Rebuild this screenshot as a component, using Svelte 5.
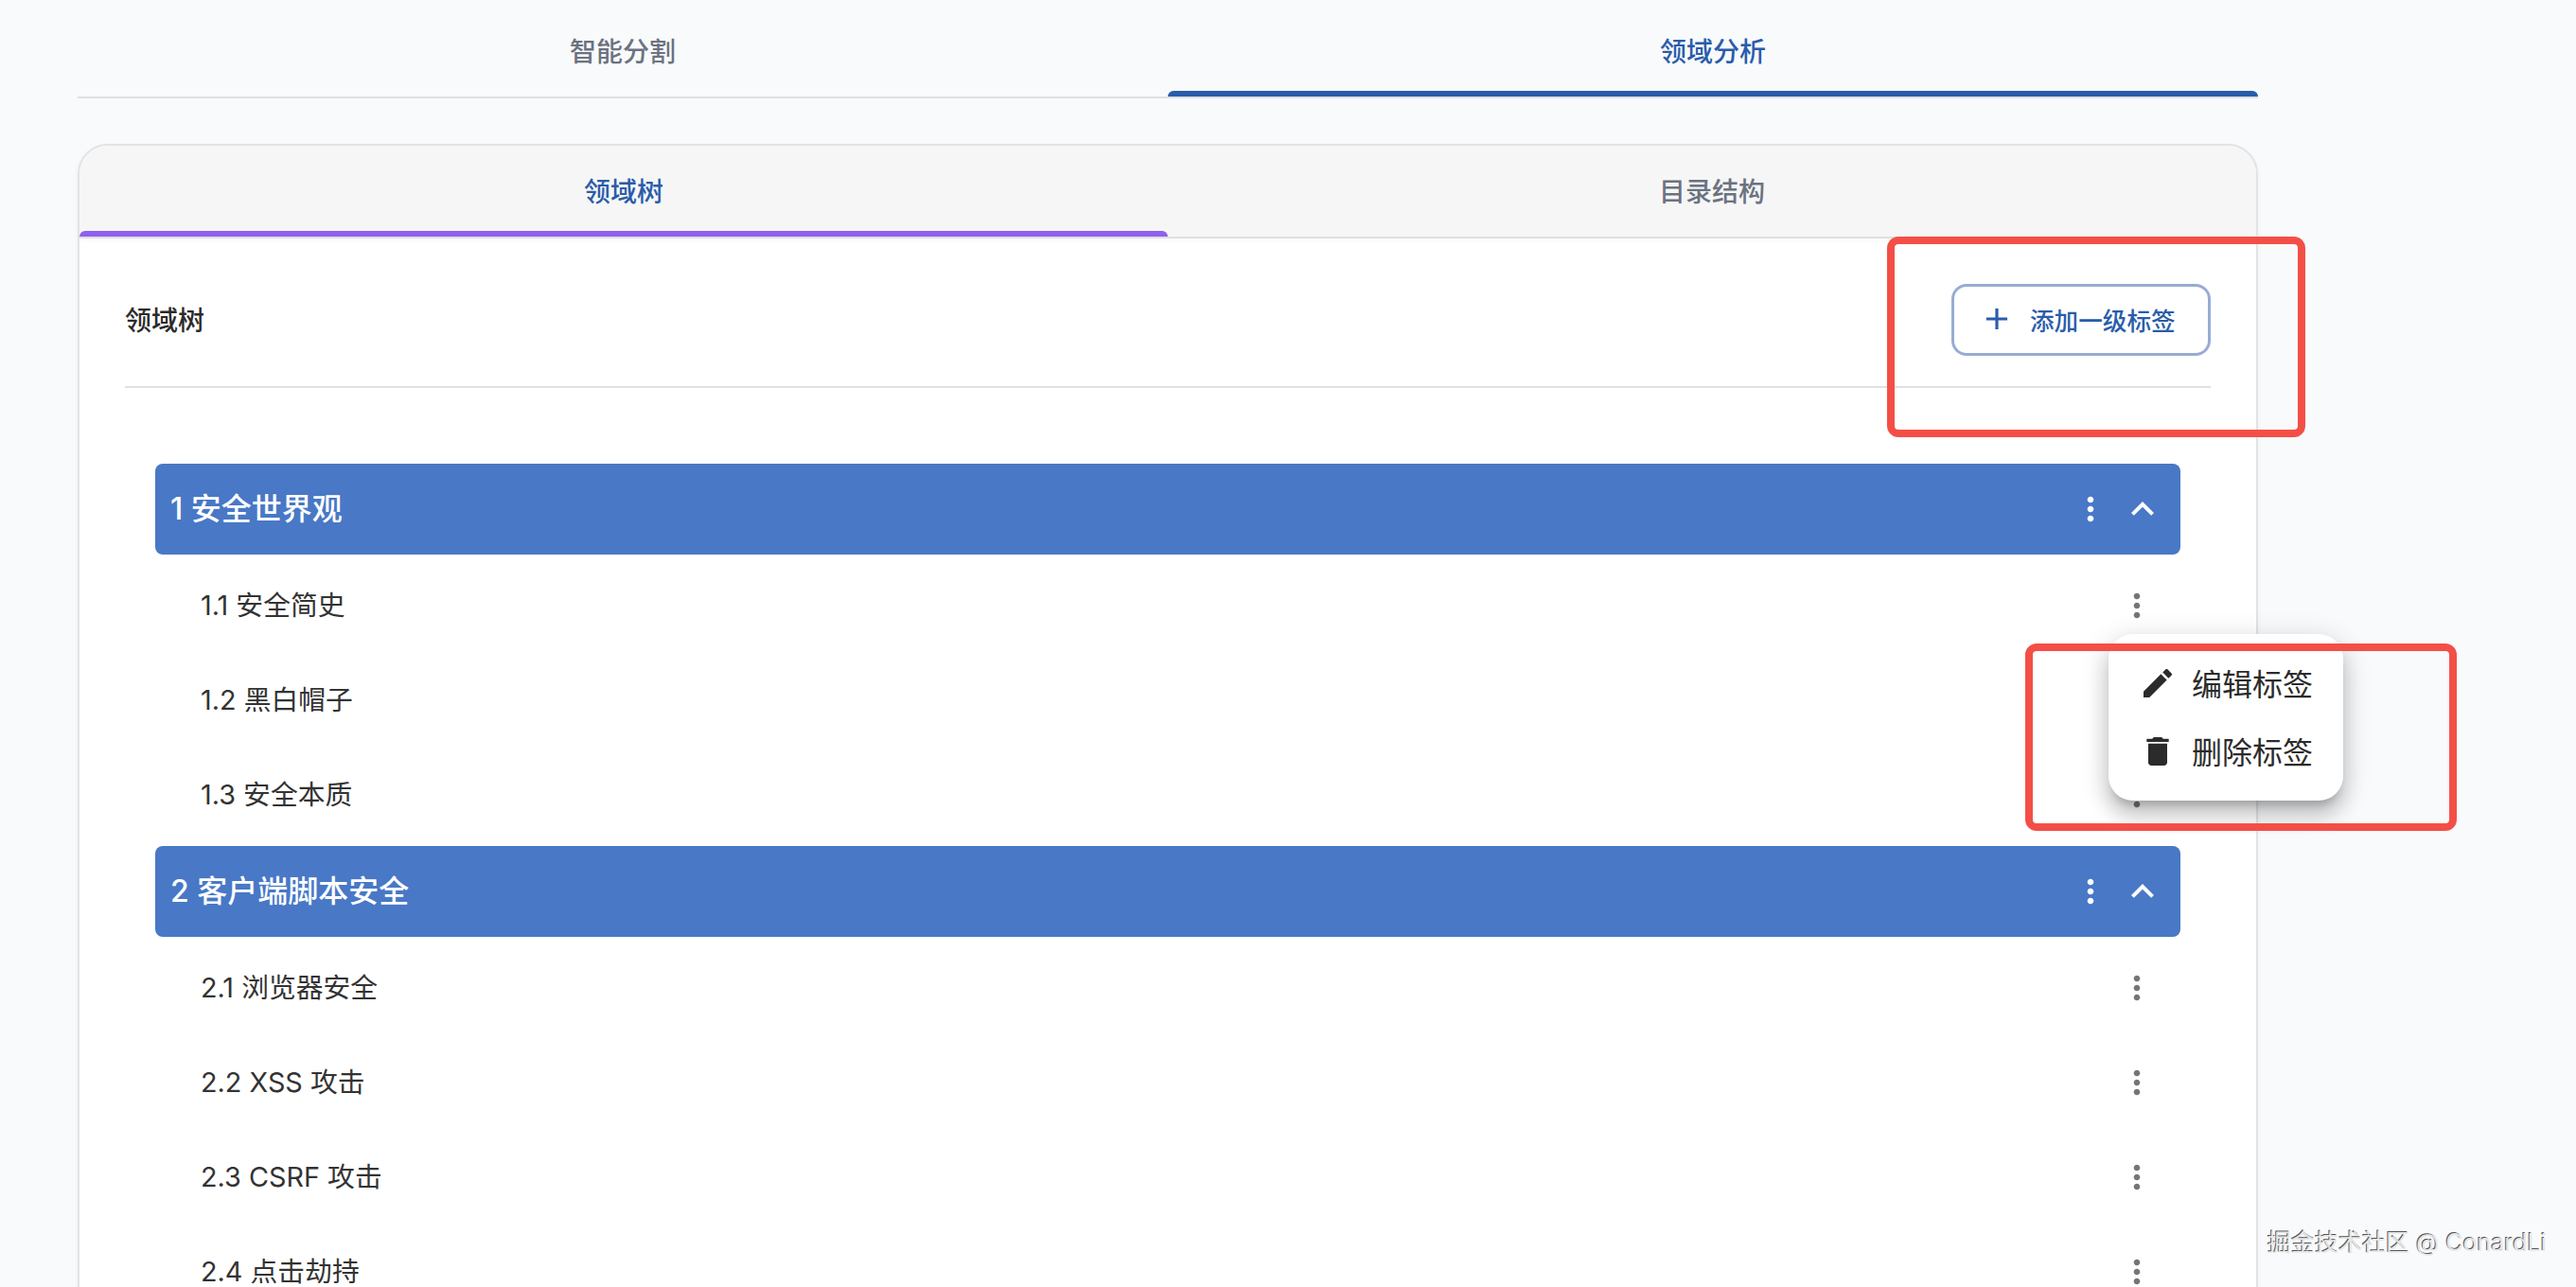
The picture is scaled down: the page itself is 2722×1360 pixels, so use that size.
<script lang="ts">
  // tag tree shown in the 领域树 tab
  const tree = [
    { title: '1 安全世界观', children: ['1.1 安全简史', '1.2 黑白帽子', '1.3 安全本质'] },
    { title: '2 客户端脚本安全', children: ['2.1 浏览器安全', '2.2 XSS 攻击', '2.3 CSRF 攻击', '2.4 点击劫持'] }
  ];
  const moreVert = 'M12 8c1.1 0 2-.9 2-2s-.9-2-2-2-2 .9-2 2 .9 2 2 2zm0 2c-1.1 0-2 .9-2 2s.9 2 2 2 2-.9 2-2-.9-2-2-2zm0 6c-1.1 0-2 .9-2 2s.9 2 2 2 2-.9 2-2-.9-2-2-2z';
</script>

<div class="page">
  <nav class="tabs">
    <div class="tab">智能分割</div>
    <div class="tab active">领域分析</div>
  </nav>

  <section class="card">
    <nav class="tabs inner">
      <div class="tab active">领域树</div>
      <div class="tab">目录结构</div>
    </nav>

    <div class="body">
      <header class="head">
        <h2>领域树</h2>
        <button class="add">
          <svg viewBox="0 0 24 24" width="38" height="38"><path fill="currentColor" d="M19 13h-6v6h-2v-6H5v-2h6V5h2v6h6v2z" /></svg>
          添加一级标签
        </button>
      </header>

      <div class="tree">
        {#each tree as group}
          <div class="group">
            <span>{group.title}</span>
            <svg viewBox="0 0 24 24" width="40" height="40"><path fill="currentColor" d={moreVert} /></svg>
            <svg viewBox="0 0 24 24" width="48" height="48"><path fill="currentColor" d="M12 8l-6 6 1.41 1.41L12 10.83l4.59 4.58L18 14z" /></svg>
          </div>
          {#each group.children as child}
            <div class="row">
              <span>{child}</span>
              <svg viewBox="0 0 24 24" width="40" height="40"><path fill="currentColor" d={moreVert} /></svg>
            </div>
          {/each}
        {/each}
      </div>
    </div>
  </section>

  <div class="menu">
    <div class="item">
      <svg viewBox="0 0 24 24" width="40" height="40"><path fill="currentColor" d="M3 17.25V21h3.75L17.81 9.94l-3.75-3.75L3 17.25zM20.71 7.04c.39-.39.39-1.02 0-1.41l-2.34-2.34c-.39-.39-1.02-.39-1.41 0l-1.83 1.83 3.75 3.75 1.83-1.83z" /></svg>
      <span>编辑标签</span>
    </div>
    <div class="item">
      <svg viewBox="0 0 24 24" width="40" height="40"><path fill="currentColor" d="M6 19c0 1.1.9 2 2 2h8c1.1 0 2-.9 2-2V7H6v12zM19 4h-3.5l-1-1h-5l-1 1H5v2h14V4z" /></svg>
      <span>删除标签</span>
    </div>
  </div>

  <div class="mark mark-add"></div>
  <div class="mark mark-menu"></div>
  <div class="watermark">掘金技术社区 @ ConardLi</div>
</div>

<style>
  :global(body) {
    margin: 0;
    background: #f8fafc;
    overflow: hidden;
  }
  .page {
    position: relative;
    height: 1360px;
    overflow: hidden;
    padding: 0 336px 0 82px;
    font-family: Inter, "Noto Sans CJK SC", sans-serif;
    color: #333;
  }
  .tabs {
    display: grid;
    grid-template-columns: 1152px 1fr;
    height: 104px;
    box-sizing: border-box;
    border-bottom: 2px solid #e0e0e0;
  }
  .tab {
    position: relative;
    display: flex;
    align-items: center;
    justify-content: center;
    padding-top: 4px;
    font-size: 28px;
    font-weight: 500;
    color: #6b7280;
  }
  .tab.active {
    color: #2a5caa;
  }
  .tab.active::after {
    content: '';
    position: absolute;
    left: 0;
    right: 0;
    bottom: 0;
    height: 6px;
    border-radius: 6px 6px 0 0;
    background: #2a5caa;
  }
  .card {
    margin-top: 48px;
    height: 1400px;
    box-sizing: border-box;
    background: #fff;
    border: 2px solid #e3e3e3;
    border-radius: 32px 32px 0 0;
    overflow: hidden;
    box-shadow: 0 2px 6px rgba(0, 0, 0, .04);
  }
  .inner {
    height: 98px;
    grid-template-columns: 1150px 1fr;
    background: #f6f6f6;
    box-shadow: 0 2px 6px rgba(0, 0, 0, .03);
  }
  .inner .tab {
    padding: 0 0 2px;
  }
  .inner .tab.active::after {
    background: #9061ee;
  }
  .body {
    padding: 48px 48px 0;
  }
  .head {
    display: flex;
    align-items: center;
    justify-content: space-between;
    padding-bottom: 32px;
    border-bottom: 2px solid #e0e0e0;
  }
  h2 {
    margin: 0 0 2px;
    font-size: 28px;
    font-weight: 500;
    color: #2b2b2b;
  }
  .add {
    display: flex;
    align-items: center;
    gap: 16px;
    width: 274px;
    height: 76px;
    box-sizing: border-box;
    padding: 0 0 2px 26px;
    border: 3px solid #97acd5;
    border-radius: 16px;
    background: #fff;
    color: #2a5caa;
    font: 500 25.6px Inter, "Noto Sans CJK SC", sans-serif;
  }
  .tree {
    padding: 80px 32px 0;
  }
  .group {
    display: flex;
    align-items: center;
    gap: 6px;
    height: 96px;
    margin-bottom: 4px;
    padding: 0 16px;
    border-radius: 8px;
    background: #4878c6;
    color: #fff;
    font-size: 32px;
    font-weight: 500;
  }
  .group svg:nth-of-type(2) {
    margin-left: 5px;
  }
  .group span, .row span {
    flex: 1;
    line-height: 1;
  }
  .row {
    display: flex;
    align-items: center;
    height: 100px;
    padding: 0 26px 0 48px;
    font-size: 28.8px;
  }
  .row svg {
    color: #757575;
  }
  .row:has(+ .group) {
    margin-bottom: 4px;
  }
  .menu {
    position: absolute;
    left: 2228px;
    top: 670px;
    width: 248px;
    height: 176px;
    box-sizing: border-box;
    padding-top: 16px;
    border-radius: 26px;
    background: #fff;
    box-shadow: 0 10px 10px -6px rgba(0, 0, 0, .2), 0 16px 20px 2px rgba(0, 0, 0, .14), 0 6px 28px 4px rgba(0, 0, 0, .12);
  }
  .item {
    display: flex;
    align-items: center;
    gap: 16px;
    height: 72px;
    padding-left: 32px;
    font-size: 32px;
    color: #2b2b2b;
  }
  .item span {
    padding-bottom: 3px;
  }
  .mark {
    position: absolute;
    box-sizing: border-box;
    border: 8px solid #f44f47;
    border-radius: 12px;
  }
  .mark-add {
    left: 1994px;
    top: 250px;
    width: 442px;
    height: 212px;
  }
  .mark-menu {
    left: 2140px;
    top: 680px;
    width: 456px;
    height: 198px;
  }
  .watermark {
    position: absolute;
    left: 2396px;
    top: 1297px;
    font-size: 25px;
    line-height: 32px;
    white-space: nowrap;
    color: #e6e6e6;
    text-shadow: -1px -1px 0 #555;
  }
</style>
